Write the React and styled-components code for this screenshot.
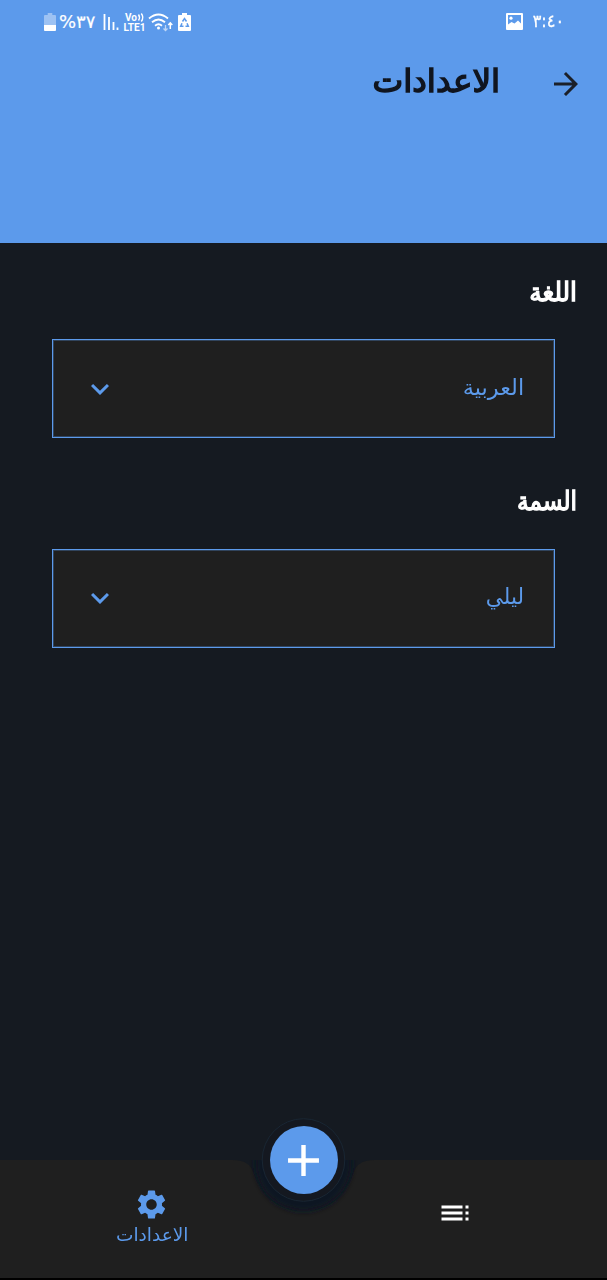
import React from "react";
import styled, { createGlobalStyle } from "styled-components";
import { MdSettings, MdToc, MdArrowForward, MdExpandMore, MdAdd } from "react-icons/md";

const blue = "#5c9aeb";

const GlobalStyle = createGlobalStyle`
  * { box-sizing: border-box; }
  body { margin: 0; background: #151a21; font-family: "DejaVu Sans", sans-serif; }
  svg { display: block; flex: none; }
`;

const Screen = styled.div`
  direction: rtl;
  height: 1280px;
  display: flex;
  flex-direction: column;
  background: #151a21;
  overflow: hidden;
`;

const Header = styled.header`
  height: 243px;
  background: ${blue};
`;

const StatusBar = styled.div`
  height: 44px;
  padding: 0 43px 0 44px;
  display: flex;
  justify-content: space-between;
  align-items: center;
  color: #fff;
`;

const StatusGroup = styled.div`
  display: flex;
  align-items: center;
  gap: ${(p) => p.$gap}px;
`;

const Label = styled.span`
  display: block;
  white-space: nowrap;
  font-size: ${(p) => p.$size}px;
  line-height: 1.4;
  color: ${(p) => p.$color || "#fff"};
  -webkit-text-stroke: ${(p) => p.$stroke || 0}px currentColor;
  transform: scaleX(${(p) => p.$stretch || 1});
  transform-origin: ${(p) => p.$origin || "right"} center;
`;

const TitleBar = styled.div`
  height: 80px;
  padding: 0 23px 0 0;
  display: flex;
  align-items: center;
  gap: 48px;
  color: #1b2029;
`;

const Title = styled(Label)`
  margin-bottom: 6px;
`;

const Content = styled.main`
  flex: 1;
  padding-top: 27px;
`;

const Field = styled.section`
  height: 209.5px;
`;

const FieldHeading = styled.div`
  height: 69px;
  padding: 3.5px 30px 0 0;
`;

const Select = styled.div`
  width: 503px;
  height: 99px;
  margin: 0 52px;
  padding: 0 30px 0 29px;
  border: 1px solid ${blue};
  box-shadow: inset 0 0 0 1px rgba(92, 154, 235, 0.3);
  background: #1f1f1f;
  color: ${blue};
  display: flex;
  align-items: center;
  justify-content: space-between;
`;

const SelectValue = styled(Label)`
  margin-bottom: 1px;
`;

const BottomBar = styled.nav`
  position: relative;
  height: 120px;
  display: flex;
  border-bottom: 2px solid #000;
`;

const BarShape = styled.svg`
  position: absolute;
  left: 0;
  top: -50px;
`;

const Tab = styled.div`
  position: relative;
  flex: 1;
  display: flex;
  flex-direction: column;
  align-items: center;
  padding-top: ${(p) => p.$top}px;
  color: ${(p) => p.$color};
`;

const AddButton = styled.div`
  position: absolute;
  left: 269.5px;
  top: -34px;
  width: 68px;
  height: 68px;
  border-radius: 50%;
  background: ${blue};
  color: #fff;
  display: flex;
  align-items: center;
  justify-content: center;
`;

function PhotoIcon() {
  return (
    <svg width="17" height="17" viewBox="0 0 17 17">
      <path fillRule="evenodd" fill="#fff" d="M1 0h15a1 1 0 0 1 1 1v15a1 1 0 0 1-1 1H1a1 1 0 0 1-1-1V1a1 1 0 0 1 1-1zM2 2v9.500l3.500-2.500 3 1.500 3.500-3 3 3V2z" />
      <circle cx="5" cy="5.200" r="1.600" fill="#fff" />
    </svg>
  );
}

function SystemIcons() {
  return (
    <svg width="89" height="22" viewBox="0 0 89 22" fill="none" stroke="#fff">
      <path strokeWidth="1.8" d="M1.500 3v16M6 6v13M10.500 11v8M14.500 16.500v2.500" />
      <g fill="#fff" stroke="none" fontFamily="Roboto, sans-serif" fontWeight="700" direction="ltr">
        <text x="22" y="10" fontSize="10" textLength="12">Vo</text>
        <text x="20.500" y="20" fontSize="10" textLength="22" lengthAdjust="spacingAndGlyphs">LTE1</text>
      </g>
      <path strokeWidth="1.400" d="M35.500 3.500q2 3 0 6M38.300 2.500q3 4 0 8" />
      <path strokeWidth="1.8" d="M46 7.500q9.500-8 19 0M49 11.200q6.500-5.500 13 0M52 14.800q3.500-3 7 0" />
      <circle cx="55.500" cy="17" r="1.500" fill="#fff" stroke="none" />
      <path strokeWidth="1.500" d="M67.300 18v-6M65.300 14l2-2.200 2 2.200" />
      <path strokeWidth="1.300" opacity=".6" d="M62.500 14v5M60.500 17.500l2 2 2-2" />
      <path fill="#fff" stroke="none" d="M79 2h5v2h3a1 1 0 0 1 1 1v14a1 1 0 0 1-1 1H76a1 1 0 0 1-1-1V5a1 1 0 0 1 1-1h3z" />
      <path stroke={blue} strokeWidth="1.500" d="M79.500 10.500l2-3 2 3M79 12.200l-1.300 3h2.800M84 12.200l1.300 3h-2.800" />
    </svg>
  );
}

function BatteryIcon() {
  return (
    <svg width="12" height="18" viewBox="0 0 13 18" preserveAspectRatio="none" fill="#fff">
      <path opacity=".4" d="M4 0h5v2h3a1 1 0 0 1 1 1v9H0V3a1 1 0 0 1 1-1h3z" />
      <path d="M0 12h13v5a1 1 0 0 1-1 1H1a1 1 0 0 1-1-1z" />
    </svg>
  );
}

function Setting({ heading, value, headingStretch, valueStretch }) {
  return (
    <Field>
      <FieldHeading>
        <Label $size={26} $stroke={1.3} $stretch={headingStretch}>{heading}</Label>
      </FieldHeading>
      <Select>
        <SelectValue $size={22} $stretch={valueStretch} $color={blue}>{value}</SelectValue>
        <MdExpandMore size={36} />
      </Select>
    </Field>
  );
}

export default function App() {
  return (
    <>
      <GlobalStyle />
      <Screen>
        <Header>
          <StatusBar>
            <StatusGroup $gap={8}>
              <Label $size={17} $stretch={0.95} $stroke={0.3}>٣:٤٠</Label>
              <PhotoIcon />
            </StatusGroup>
            <StatusGroup $gap={8}>
              <SystemIcons />
              <StatusGroup $gap={3}>
                <Label $size={18} $stroke={0.2}>٣٧%</Label>
                <BatteryIcon />
              </StatusGroup>
            </StatusGroup>
          </StatusBar>
          <TitleBar>
            <MdArrowForward size={36} />
            <Title $size={32} $stroke={1.5} $stretch={1.02} $color="#10151f">الاعدادات</Title>
          </TitleBar>
        </Header>
        <Content>
          <Setting heading="اللغة" value="العربية" headingStretch={0.95} valueStretch={1.02} />
          <Setting heading="السمة" value="ليلي" headingStretch={0.89} valueStretch={0.98} />
        </Content>
        <BottomBar>
          <BarShape width="607" height="168" viewBox="0 -50 607 168">
            <defs>
              <filter id="soft" x="-20%" y="-20%" width="140%" height="140%">
                <feGaussianBlur stdDeviation="3" />
              </filter>
              <clipPath id="bar">
                <path d="M0 0H607V118H0z" />
              </clipPath>
            </defs>
            <path fill="#1f1f1f" d="M0 0H232C246 0 251 5 254 14C262 38 280 51 303.500 51S345 38 353 14C356 5 361 0 375 0H607V118H0z" />
            <circle cx="303.500" cy="3" r="48" fill="#111722" filter="url(#soft)" clipPath="url(#bar)" />
            <circle cx="303.500" cy="0" r="41.300" fill="#141820" stroke="#192633" strokeWidth="1" />
          </BarShape>
          <Tab $top={35} $color="#fff">
            <MdToc size={36} />
          </Tab>
          <Tab $top={27} $color={blue}>
            <MdSettings size={35} />
            <Label $size={18} $stretch={1.03} $color={blue} $origin="center">الاعدادات</Label>
          </Tab>
          <AddButton>
            <MdAdd size={53} />
          </AddButton>
        </BottomBar>
      </Screen>
    </>
  );
}
